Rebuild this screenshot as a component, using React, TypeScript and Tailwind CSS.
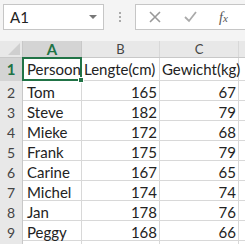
import React from 'react'

const rows: [string, number, number][] = [
  ['Tom', 165, 67],
  ['Steve', 182, 79],
  ['Mieke', 172, 68],
  ['Frank', 175, 79],
  ['Carine', 167, 65],
  ['Michel', 174, 74],
  ['Jan', 178, 76],
  ['Peggy', 168, 66],
]

const cols = 'grid grid-cols-[23px_59px_78px_79px_6px]'

export default function App() {
  return (
    <div className="w-[245px] h-[245px] overflow-hidden bg-white text-[#222]" style={{ fontFamily: 'Lato, "Open Sans", sans-serif' }}>
      {/* formula bar */}
      <div className="h-[41px] bg-[#f4f4f4] flex items-start pt-[4px] pl-[3px]">
        <div className="w-[101px] h-[26px] bg-white border border-[#c6c6c6] flex items-center pl-[6px] pr-[6px] text-[15px]">
          <span className="flex-1">A1</span>
          <span className="w-0 h-0 border-l-[4px] border-r-[4px] border-t-[4px] border-l-transparent border-r-transparent border-t-[#777]" />
        </div>
        <div className="w-[31px] h-[26px] flex flex-col items-center justify-center gap-[2px]">
          <span className="w-[2px] h-[2px] bg-[#aaa]" />
          <span className="w-[2px] h-[2px] bg-[#aaa]" />
          <span className="w-[2px] h-[2px] bg-[#aaa]" />
        </div>
        <div className="flex-1 h-[26px] bg-white border border-[#c6c6c6] border-r-0 flex items-center text-[#888]">
          <svg width="12" height="12" viewBox="0 0 12 12" className="ml-[13px]">
            <path d="M1 1L11 11M11 1L1 11" stroke="#999" strokeWidth="1.6" />
          </svg>
          <svg width="13" height="12" viewBox="0 0 13 12" className="ml-[23px]">
            <path d="M1 6L5 10L12 1" stroke="#aaa" strokeWidth="1.8" fill="none" />
          </svg>
          <span className="ml-[22px] text-[14px] italic text-[#555]" style={{ fontFamily: '"Liberation Serif", serif' }}>f<span className="text-[11px]">x</span></span>
        </div>
      </div>
      {/* column headers */}
      <div className={`${cols} h-[17px] bg-[#e8e8e8] text-[13px] leading-none text-[#444] border-b border-[#c8c8c8]`}>
        <div className="relative border-r border-[#c8c8c8]">
          <svg width="12" height="12" className="absolute right-[2px] bottom-[2px]"><path d="M12 0L12 12L0 12Z" fill="#cfcfcf" /></svg>
        </div>
        <div className="bg-[#d4d4d4] border-r border-[#c8c8c8] flex items-center justify-center font-bold text-[#217346] text-[15px]">A</div>
        <div className="border-r border-[#d8d8d8] flex items-center justify-center">B</div>
        <div className="border-r border-[#d8d8d8] flex items-center justify-center">C</div>
        <div />
      </div>
      {/* row 1 */}
      <div className={`${cols} h-[23px] text-[15px] border-b border-[#d8d8d8]`}>
        <div className="bg-[#d4d4d4] border-r border-[#c8c8c8] flex items-center justify-center font-bold text-[#217346] text-[15px]">1</div>
        <div className="relative border-2 border-[#217346] -ml-[1px] -mt-[1px] h-[24px] flex items-center pl-[3px]">
          Persoon
          <span className="absolute -right-[4px] -bottom-[4px] w-[6px] h-[6px] bg-[#217346] border border-white" />
        </div>
        <div className="border-r border-[#d8d8d8] flex items-center pl-[2px]">Lengte(cm)</div>
        <div className="border-r border-[#d8d8d8] flex items-center pl-[2px]">Gewicht(kg)</div>
        <div />
      </div>
      {rows.map(([name, l, w], i) => (
        <div key={name} className={`${cols} h-[20px] text-[15px] border-b border-[#d8d8d8]`}>
          <div className="bg-[#e8e8e8] border-r border-[#c8c8c8] flex items-center justify-center text-[14px] text-[#444]">{i + 2}</div>
          <div className="border-r border-[#d8d8d8] flex items-center pl-[4px]">{name}</div>
          <div className="border-r border-[#d8d8d8] flex items-center justify-end pr-[2px]">{l}</div>
          <div className="border-r border-[#d8d8d8] flex items-center justify-end pr-[2px]">{w}</div>
          <div />
        </div>
      ))}
    </div>
  )
}
